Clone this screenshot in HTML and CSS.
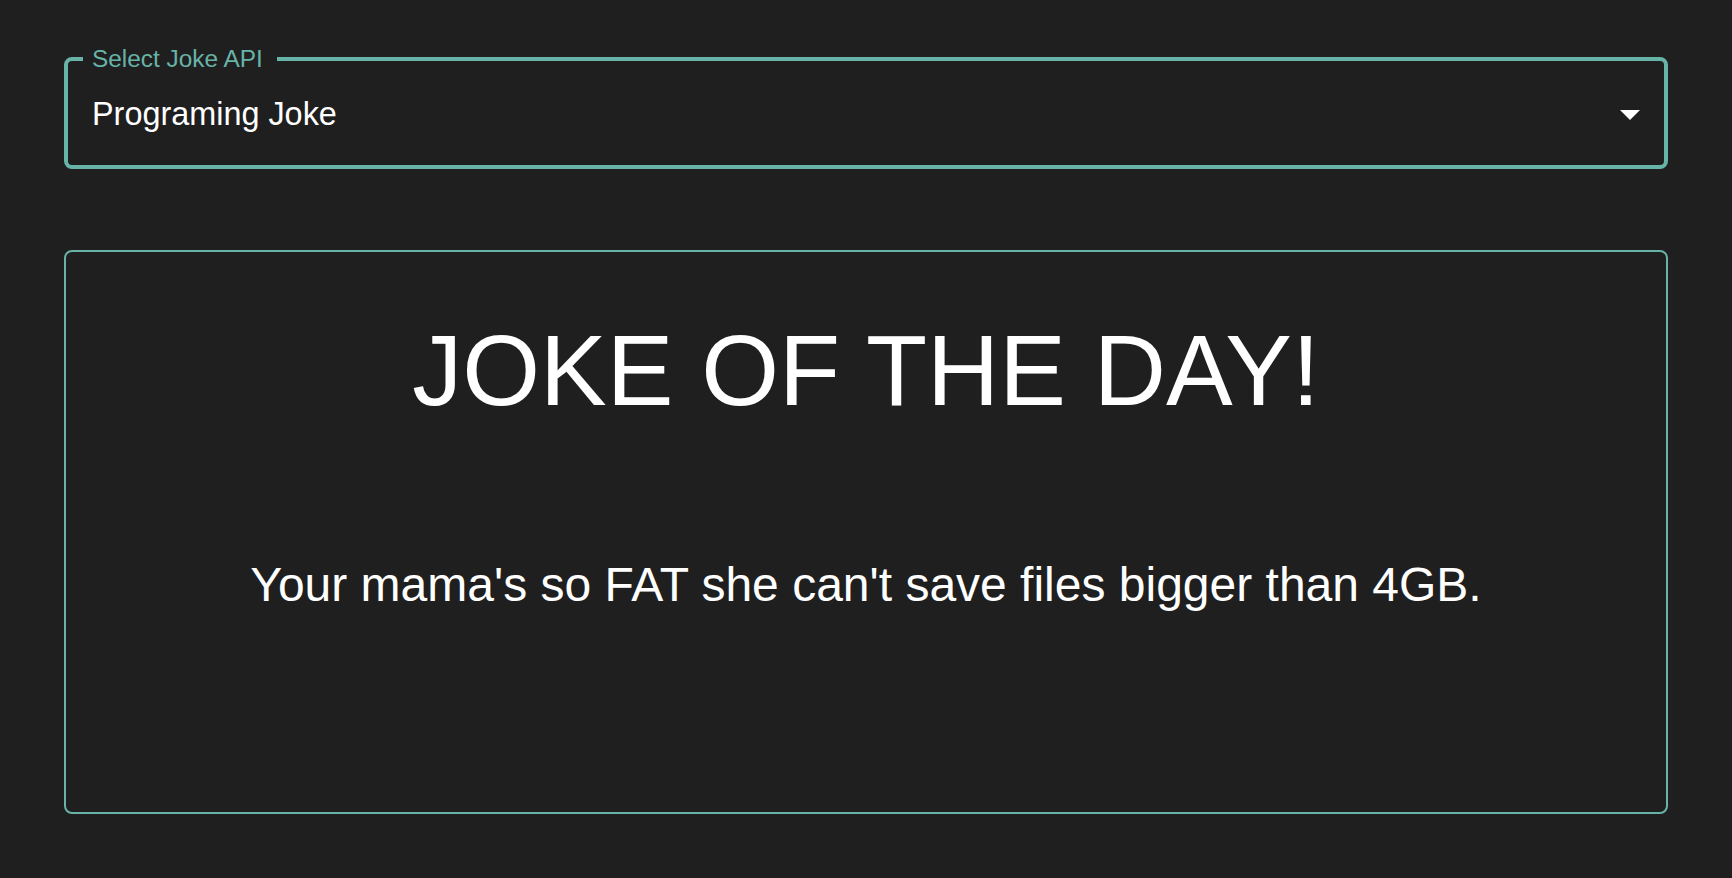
FILE: index.html
```html
<!DOCTYPE html>
<html lang="en">
<head>
<meta charset="utf-8">
<title>Joke of the Day</title>
<link rel="stylesheet" href="styles.css">
</head>
<body>
<main class="page">
  <fieldset class="select">
    <legend class="select-label">Select Joke API</legend>
    <div class="select-row">
      <span class="select-value">Programing Joke</span>
      <svg class="select-icon" viewBox="0 0 24 24" aria-hidden="true"><path d="M7 10l5 5 5-5z" fill="#ffffff"/></svg>
    </div>
  </fieldset>
  <section class="card">
    <h1 class="card-title">JOKE OF THE DAY!</h1>
    <p class="card-joke">Your mama's so FAT she can't save files bigger than 4GB.</p>
  </section>
</main>
</body>
</html>
```

FILE: styles.css
```css
html, body {
  margin: 0;
  padding: 0;
  background: #1f1f1f;
}

body {
  font-family: "Liberation Sans", Arial, Helvetica, sans-serif;
  color: #ffffff;
}

.page {
  padding: 47px 64px 0;
  display: flex;
  flex-direction: column;
}

.select {
  margin: 0;
  min-width: 0;
  border: 4px solid #68b3a7;
  border-radius: 8px;
  padding: 24px 10px 32px 24px;
}

.select-label {
  margin-left: -9px;
  padding: 0 14px 0 9px;
  font-size: 24.4px;
  line-height: 24px;
  color: #68b3a7;
}

.select-row {
  display: flex;
  align-items: center;
  justify-content: space-between;
  height: 38px;
}

.select-value {
  font-size: 32.4px;
  line-height: 38px;
  color: #ffffff;
}

.select-icon {
  width: 48px;
  height: 48px;
  flex: none;
}

.card {
  margin-top: 81px;
  height: 564px;
  box-sizing: border-box;
  border: 2px solid #68b3a7;
  border-radius: 8px;
  padding-top: 58px;
  text-align: center;
}

.card-title {
  margin: 0;
  font-size: 100px;
  line-height: 120px;
  font-weight: 400;
}

.card-joke {
  margin: 119px 0 0;
  font-size: 48px;
  line-height: 72px;
}
```
